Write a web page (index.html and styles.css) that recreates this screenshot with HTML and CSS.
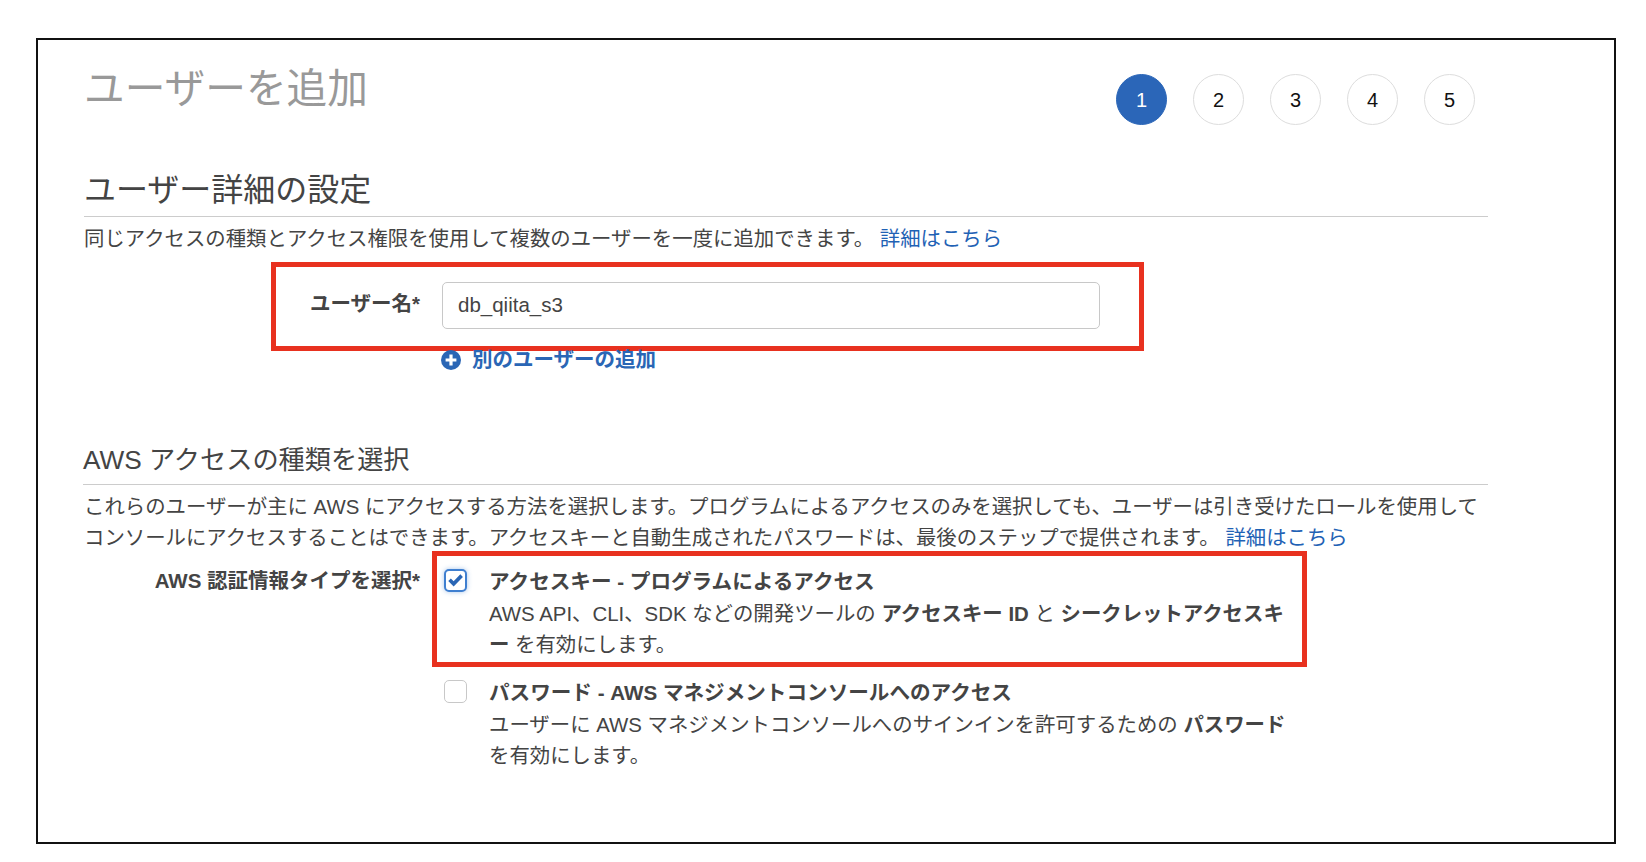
FILE: index.html
```html
<!DOCTYPE html>
<html lang="ja">
<head>
<meta charset="utf-8">
<title>ユーザーを追加</title>
<link rel="stylesheet" href="styles.css">
</head>
<body>
<main class="frame">
  <header class="top">
    <h1 class="title">ユーザーを追加</h1>
    <ol class="steps">
      <li class="step step-active">1</li>
      <li class="step">2</li>
      <li class="step">3</li>
      <li class="step">4</li>
      <li class="step">5</li>
    </ol>
  </header>

  <section class="section-one">
    <h2 class="heading heading-lg">ユーザー詳細の設定</h2>
    <p class="para">同じアクセスの種類とアクセス権限を使用して複数のユーザーを一度に追加できます。 <a class="link" href="#">詳細はこちら</a></p>
    <div class="name-box">
      <label class="field-label name-label">ユーザー名*</label>
      <div class="input">db_qiita_s3</div>
    </div>
    <a class="add-user" href="#">
      <svg class="plus" viewBox="0 0 20 20" aria-hidden="true"><circle cx="10" cy="10" r="10" fill="#2a66b5"/><path d="M10 4.6v10.8M4.6 10h10.8" stroke="#fff" stroke-width="3.2"/></svg>
      <span>別のユーザーの追加</span>
    </a>
  </section>

  <section class="section-two">
    <h2 class="heading heading-md">AWS アクセスの種類を選択</h2>
    <p class="para para-two">これらのユーザーが主に AWS にアクセスする方法を選択します。プログラムによるアクセスのみを選択しても、ユーザーは引き受けたロールを使用して<br>コンソールにアクセスすることはできます。アクセスキーと自動生成されたパスワードは、最後のステップで提供されます。 <a class="link" href="#">詳細はこちら</a></p>
    <div class="cred-row">
      <div class="field-label cred-label">AWS 認証情報タイプを選択*</div>
      <div class="options">
        <div class="option option-marked">
          <span class="check check-on"><svg viewBox="0 0 16 14" aria-hidden="true"><path d="M13.2.4 6 7.8 3 4.8.2 7.6 6 13.4 16 3.2Z" fill="#2a66b5"/></svg></span>
          <div class="option-text">
            <div class="option-title">アクセスキー - プログラムによるアクセス</div>
            <div class="option-desc">AWS API、CLI、SDK などの開発ツールの <b>アクセスキー ID</b> と <b>シークレットアクセスキ<br>ー</b> を有効にします。</div>
          </div>
        </div>
        <div class="option option-plain">
          <span class="check"></span>
          <div class="option-text">
            <div class="option-title">パスワード - AWS マネジメントコンソールへのアクセス</div>
            <div class="option-desc">ユーザーに AWS マネジメントコンソールへのサインインを許可するための <b>パスワード</b><br>を有効にします。</div>
          </div>
        </div>
      </div>
    </div>
  </section>
</main>
</body>
</html>
```
FILE: styles.css
```css
* { box-sizing: border-box; }
html, body { margin: 0; padding: 0; background: #fff; }
body {
  width: 1646px;
  height: 862px;
  padding: 38px 30px 20px 36px;
  font-family: "Liberation Sans", "Noto Sans CJK JP", sans-serif;
  font-size: 20.4px;
  color: #444;
  overflow: hidden;
}
.frame {
  width: 1580px;
  height: 806px;
  border: 2px solid #111;
  padding: 1px 0 0 46px;
}
.top {
  display: flex;
  justify-content: space-between;
  align-items: flex-start;
  width: 1391px;
  height: 113px;
}
.title {
  margin: 24px 0 0;
  font-size: 40.7px;
  line-height: 48px;
  font-weight: 400;
  color: #999;
}
.steps {
  display: flex;
  gap: 26px;
  margin: 33px 0 0;
  padding: 0;
  list-style: none;
}
.step {
  width: 51px;
  height: 51px;
  padding-top: 1px;
  border: 1px solid #ddd;
  border-radius: 50%;
  display: flex;
  align-items: center;
  justify-content: center;
  color: #111;
  font-size: 20px;
}
.step-active { background: #2b66b8; border-color: #2b66b8; color: #fff; }
.heading {
  margin: 0;
  width: 1404px;
  font-weight: 400;
  color: #444;
  border-bottom: 1px solid #ccc;
}
.heading-lg { font-size: 32px; line-height: 44px; padding-top: 14px; height: 63px; }
.heading-md { font-size: 26.2px; line-height: 40px; height: 45px; padding-top: 0; margin-left: -1px; width: 1405px; }
.para { margin: 7px 0 0; line-height: 30px; white-space: nowrap; }
.link { color: #1f62b5; text-decoration: none; }
.name-box {
  display: flex;
  align-items: flex-start;
  width: 873px;
  height: 89px;
  margin: 8px 0 0 187px;
  border: 5px solid #e8311f;
}
.field-label { font-size: 20.5px; font-weight: 700; text-align: right; line-height: 30px; white-space: nowrap; }
.name-label { width: 144px; margin-top: 22px; }
.input {
  width: 658px;
  height: 47px;
  margin: 15px 0 0 22px;
  padding: 0 15px;
  border: 1px solid #c8c8c8;
  border-radius: 5px;
  font-size: 20.5px;
  line-height: 44px;
  color: #444;
}
.add-user {
  display: flex;
  align-items: center;
  gap: 11px;
  margin: 0 0 0 357px;
  height: 18px;
  color: #2a66b5;
  font-size: 20.5px;
  font-weight: 700;
  text-decoration: none;
  line-height: 18px;
}
.plus { width: 20px; height: 20px; flex: none; }
.section-two { padding-top: 71px; }
.para-two { margin-top: 7px; line-height: 31px; }
.cred-row { display: flex; align-items: flex-start; margin-top: -3px; }
.cred-label { width: 336px; margin-top: 15px; }
.options { display: flex; flex-direction: column; }
.option { display: flex; align-items: flex-start; }
.option-marked {
  width: 875px;
  height: 116px;
  margin-left: 12px;
  border: 5px solid #e8311f;
  padding: 13px 0 0 7px;
  gap: 22px;
}
.option-plain { margin: 13px 0 0 24px; gap: 22px; }
.check {
  width: 23px;
  height: 23px;
  flex: none;
  border: 1px solid #c8c8c8;
  border-radius: 5px;
  background: #fff;
  display: flex;
  align-items: center;
  justify-content: center;
}
.check-on { border: 2px solid #3f7fd0; box-shadow: 0 0 5px rgba(63,127,208,.45); }
.check svg { width: 15px; height: 13px; }
.option-text { white-space: nowrap; margin-top: -2px; }
.option-title { font-size: 20.6px; font-weight: 700; line-height: 30px; }
.option-desc { line-height: 31px; margin-top: 2px; }
```
